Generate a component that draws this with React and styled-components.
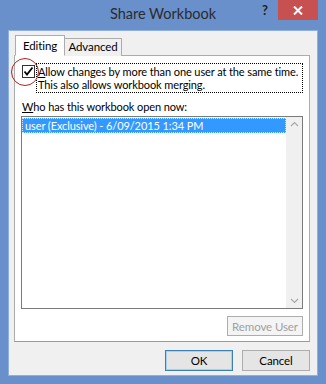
import React from "react";
import styled, { createGlobalStyle } from "styled-components";

const Global = createGlobalStyle`
  html, body { margin: 0; padding: 0; }
  body {
    background: #6990cb;
    font-family: Lato, "Noto Sans", sans-serif;
    font-size: 11px;
    letter-spacing: -0.1px;
    color: #000;
  }
`;

const Frame = styled.div`
  width: 326px;
  height: 384px;
  box-sizing: border-box;
  background: #6990cb;
  display: flex;
  flex-direction: column;
  overflow: hidden;
`;

const TitleBar = styled.div`
  height: 30px;
  display: flex;
  align-items: flex-start;
`;

const Title = styled.div`
  flex: 1;
  text-align: center;
  font-size: 14.5px;
  letter-spacing: 0;
  line-height: 28px;
  color: #2b2b2b;
  padding-left: 71px;
`;

const HelpBtn = styled.div`
  width: 20px;
  height: 20px;
  font-size: 13px;
  font-weight: bold;
  line-height: 20px;
  text-align: center;
  color: #222;
  margin-right: 3px;
`;

const CloseBtn = styled.div`
  width: 40px;
  height: 20px;
  background: #c75050;
  display: flex;
  align-items: center;
  justify-content: center;
  margin-right: 8px;
`;

const Client = styled.div`
  flex: 1;
  margin: 0 8px 8px 8px;
  background: #f0f0f0;
  border: 1px solid #8fb0de;
  box-sizing: border-box;
  display: flex;
  flex-direction: column;
  padding: 4px 7px 0 5px;
`;

const TabStrip = styled.div`
  display: flex;
  align-items: flex-end;
  height: 21px;
  padding-left: 1px;
  position: relative;
  z-index: 1;
`;

const Tab = styled.div`
  box-sizing: border-box;
  height: ${(p) => (p.$active ? "21px" : "18px")};
  width: ${(p) => p.$w}px;
  text-align: center;
  font-size: 11.5px;
  line-height: ${(p) => (p.$active ? "19px" : "16px")};
  background: ${(p) => (p.$active ? "#fff" : "#f0f0f0")};
  border: 1px solid #acacac;
  border-bottom: ${(p) => (p.$active ? "1px solid #fff" : "none")};
  border-left: ${(p) => (p.$active ? "1px solid #acacac" : "none")};
`;

const Panel = styled.div`
  height: 287px;
  box-sizing: border-box;
  background: #fff;
  border: 1px solid #acacac;
  border-bottom-color: #9a9a9a;
  margin-top: -1px;
  padding: 7px 6px 0 6px;
  display: flex;
  flex-direction: column;
`;

const CheckRow = styled.div`
  display: flex;
  align-items: flex-start;
  position: relative;
`;

const Box = styled.div`
  width: 13px;
  height: 13px;
  box-sizing: border-box;
  border: 1px solid #333;
  background: #fff;
  margin: 2px 1px 0 1px;
  flex: none;
  display: flex;
  align-items: center;
  justify-content: center;
`;

const Label = styled.div`
  border: 1px dotted #000;
  padding: 1px 2px 1px 1px;
  line-height: 13px;
  flex: 1;
  white-space: nowrap;
`;

const Circle = styled.div`
  position: absolute;
  left: -10px;
  top: -5px;
  width: 26px;
  height: 26px;
  border: 1px solid #b02020;
  border-radius: 50%;
`;

const Caption = styled.div`
  margin-top: 7px;
  line-height: 14px;
  padding-left: 1px;
`;

const ListRow = styled.div`
  margin-top: 2px;
  height: 193px;
  box-sizing: border-box;
  border: 1px solid #7a7a7a;
  display: flex;
  background: #fff;
`;

const Items = styled.div`
  flex: 1;
  padding-top: 1px;
`;

const Item = styled.div`
  background: #3399ff;
  color: #fff;
  line-height: 13px;
  padding-left: 2px;
  border: 1px dotted #cfe6ff;
`;

const Scroll = styled.div`
  width: 16px;
  background: #f0f0f0;
  display: flex;
  flex-direction: column;
  justify-content: space-between;
  align-items: center;
  padding: 4px 0;
`;

const Right = styled.div`
  display: flex;
  justify-content: flex-end;
  margin-top: 7px;
`;

const Button = styled.div`
  box-sizing: border-box;
  width: ${(p) => p.$w}px;
  height: ${(p) => p.$h}px;
  border: 1px solid ${(p) => (p.$default ? "#3c7fb1" : "#adadad")};
  box-shadow: ${(p) => (p.$default ? "inset 0 0 0 1px #a8d0f0" : "none")};
  background: ${(p) => (p.$disabled ? "#f4f4f4" : "#e5e5e5")};
  color: ${(p) => (p.$disabled ? "#a0a0a0" : "#000")};
  display: flex;
  align-items: center;
  justify-content: center;
  white-space: nowrap;
  font-size: 11.5px;
`;

const Footer = styled.div`
  display: flex;
  justify-content: flex-end;
  gap: 9px;
  margin-top: 8px;
`;

export default function App() {
  return (
    <>
      <Global />
      <Frame>
        <TitleBar>
          <Title>Share Workbook</Title>
          <HelpBtn>?</HelpBtn>
          <CloseBtn>
            <svg width="10" height="9" viewBox="0 0 10 9">
              <path d="M1 0.5 L9 8.5 M9 0.5 L1 8.5" stroke="#fff" strokeWidth="2" />
            </svg>
          </CloseBtn>
        </TitleBar>
        <Client>
          <TabStrip>
            <Tab $active $w={50}>Editing</Tab>
            <Tab $w={57}>Advanced</Tab>
          </TabStrip>
          <Panel>
            <CheckRow>
              <Circle />
              <Box>
                <svg width="11" height="11" viewBox="0 0 11 11">
                  <path d="M1.5 5.5 L4 8.5 L9.5 1.5" fill="none" stroke="#000" strokeWidth="1.8" />
                </svg>
              </Box>
              <Label>
                <u>A</u>llow changes by more than one user at the same time.
                <br />
                This also allows workbook merging.
              </Label>
            </CheckRow>
            <Caption>
              <u>W</u>ho has this workbook open now:
            </Caption>
            <ListRow>
              <Items>
                <Item>user (Exclusive) - 6/09/2015 1:34 PM</Item>
              </Items>
              <Scroll>
                <svg width="9" height="6" viewBox="0 0 9 6">
                  <path d="M1 5 L4.5 1.5 L8 5" fill="none" stroke="#a8a8a8" strokeWidth="1.2" />
                </svg>
                <svg width="9" height="6" viewBox="0 0 9 6">
                  <path d="M1 1 L4.5 4.5 L8 1" fill="none" stroke="#a8a8a8" strokeWidth="1.2" />
                </svg>
              </Scroll>
            </ListRow>
            <Right>
              <Button $disabled $w={76} $h={20}>Remove User</Button>
            </Right>
          </Panel>
          <Footer>
            <Button $default $w={68} $h={21}>OK</Button>
            <Button $w={68} $h={21}>Cancel</Button>
          </Footer>
        </Client>
      </Frame>
    </>
  );
}
